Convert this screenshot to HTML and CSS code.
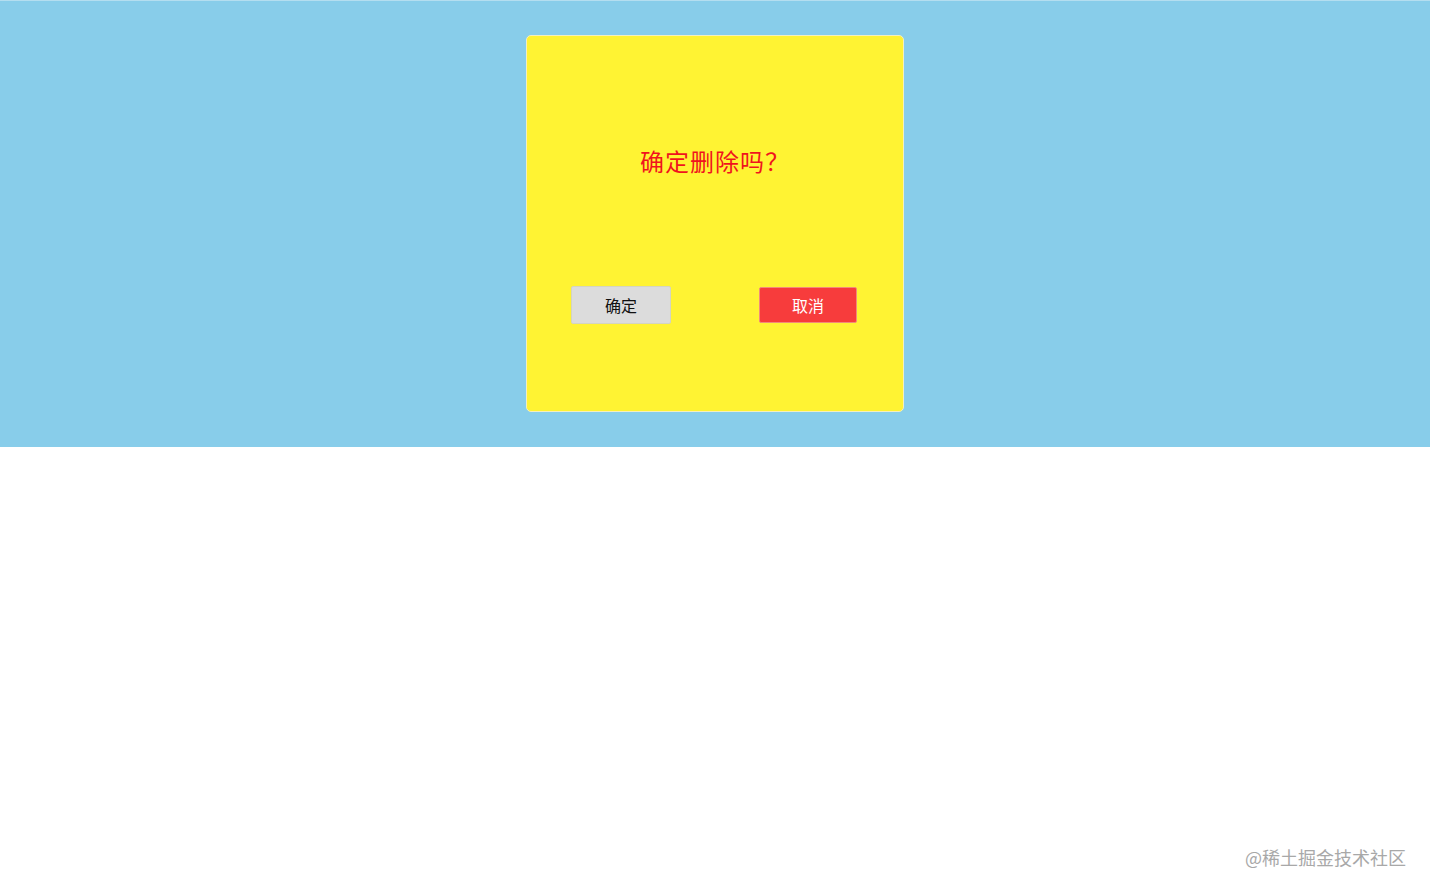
FILE: index.html
```html
<!DOCTYPE html>
<html lang="zh-CN">
<head>
<meta charset="utf-8">
<title>确定删除吗？</title>
<link rel="stylesheet" href="styles.css">
</head>
<body>
<div class="stage">
  <div class="dialog">
    <div class="title">确定删除吗？</div>
    <div class="actions">
      <button class="btn btn-ok">确定</button>
      <button class="btn btn-cancel">取消</button>
    </div>
  </div>
</div>
<div class="watermark">@稀土掘金技术社区</div>
</body>
</html>
```

FILE: styles.css
```css
html, body {
  margin: 0;
  padding: 0;
  background: #ffffff;
  font-family: "Noto Sans CJK SC", "Noto Sans", sans-serif;
}

.stage {
  box-sizing: border-box;
  height: 447px;
  background: #88cdea;
  border-top: 1px solid #b4def0;
  padding-top: 34px;
  display: flex;
  justify-content: center;
  align-items: flex-start;
}

.dialog {
  box-sizing: border-box;
  width: 378px;
  height: 377px;
  background: #fff333;
  border: 1px solid #f3efc0;
  border-radius: 5px;
  display: flex;
  flex-direction: column;
}

.title {
  margin-top: 110px;
  text-align: center;
  color: #f0131e;
  font-size: 24px;
  line-height: 30px;
  letter-spacing: 1px;
}

.actions {
  margin-top: 110px;
  display: flex;
  justify-content: space-around;
}

.btn {
  box-sizing: border-box;
  width: 100px;
  height: 38px;
  font-family: "Noto Sans CJK SC", "Noto Sans", sans-serif;
  font-size: 16px;
  border-radius: 2px;
  padding: 0;
  cursor: pointer;
}

.btn-ok {
  background: #dcdcdc;
  color: #111111;
  border: 1px solid #d4d4c0;
}

.btn-cancel {
  width: 98px;
  height: 36px;
  margin-top: 1px;
  margin-right: 2px;
  background: #f73c3c;
  color: #ffffff;
  border: 1px solid #f28a7a;
}

.watermark {
  position: absolute;
  right: 24px;
  top: 845px;
  color: #a8a8a8;
  font-size: 18px;
  line-height: 24px;
  letter-spacing: 0;
}
```
